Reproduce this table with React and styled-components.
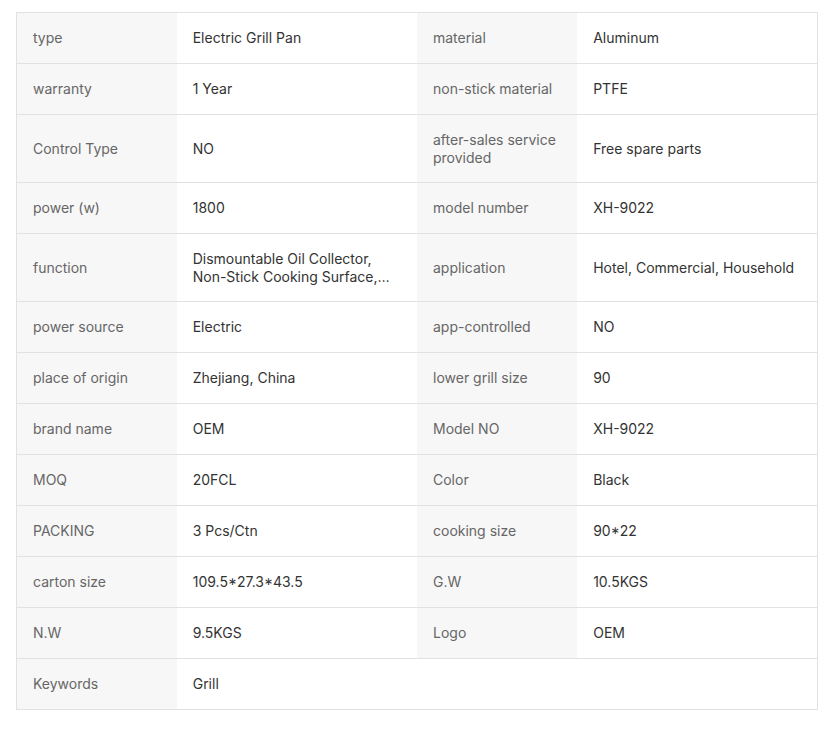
import React from "react";
import styled, { createGlobalStyle } from "styled-components";

const specs = [
  ["type", "Electric Grill Pan", "material", "Aluminum"],
  ["warranty", "1 Year", "non-stick material", "PTFE"],
  ["Control Type", "NO", "after-sales service provided", "Free spare parts"],
  ["power (w)", "1800", "model number", "XH-9022"],
  [
    "function",
    "Dismountable Oil Collector, Non-Stick Cooking Surface, Temperature Control, Easily Cleaned",
    "application",
    "Hotel, Commercial, Household",
  ],
  ["power source", "Electric", "app-controlled", "NO"],
  ["place of origin", "Zhejiang, China", "lower grill size", "90"],
  ["brand name", "OEM", "Model NO", "XH-9022"],
  ["MOQ", "20FCL", "Color", "Black"],
  ["PACKING", "3 Pcs/Ctn", "cooking size", "90*22"],
  ["carton size", "109.5*27.3*43.5", "G.W", "10.5KGS"],
  ["N.W", "9.5KGS", "Logo", "OEM"],
];

const GlobalStyle = createGlobalStyle`
  body {
    margin: 0;
    background: #fff;
    font-family: Inter, "Noto Sans", sans-serif;
  }
`;

const Page = styled.div`
  padding: 12px 16px;
`;

const Table = styled.table`
  width: 100%;
  border-collapse: collapse;
  table-layout: fixed;
  border: 1px solid #e2e2e2;
  font-size: 14px;
  line-height: 18px;
`;

const Col = styled.col`
  width: ${(p) => (p.$wide ? "30%" : "20%")};
`;

const Row = styled.tr`
  border-bottom: 1px solid #e2e2e2;
`;

const LabelCell = styled.td`
  height: 19px;
  padding: 15.5px 16px;
  background: #f7f7f7;
  color: #666;
  vertical-align: middle;
`;

const ValueCell = styled.td`
  height: 19px;
  padding: 15.5px 16px;
  background: #fff;
  color: #333;
  vertical-align: middle;
`;

// long values get clamped to two lines
const Clamp = styled.div`
  display: -webkit-box;
  -webkit-box-orient: vertical;
  -webkit-line-clamp: 2;
  overflow: hidden;
`;

export default function App() {
  return (
    <Page>
      <GlobalStyle />
      <Table>
        <colgroup>
          <Col />
          <Col $wide />
          <Col />
          <Col $wide />
        </colgroup>
        <tbody>
          {specs.map(([k1, v1, k2, v2]) => (
            <Row key={k1}>
              <LabelCell>{k1}</LabelCell>
              <ValueCell>
                <Clamp>{v1}</Clamp>
              </ValueCell>
              <LabelCell>{k2}</LabelCell>
              <ValueCell>
                <Clamp>{v2}</Clamp>
              </ValueCell>
            </Row>
          ))}
          <Row>
            <LabelCell>Keywords</LabelCell>
            <ValueCell colSpan={3}>Grill</ValueCell>
          </Row>
        </tbody>
      </Table>
    </Page>
  );
}
